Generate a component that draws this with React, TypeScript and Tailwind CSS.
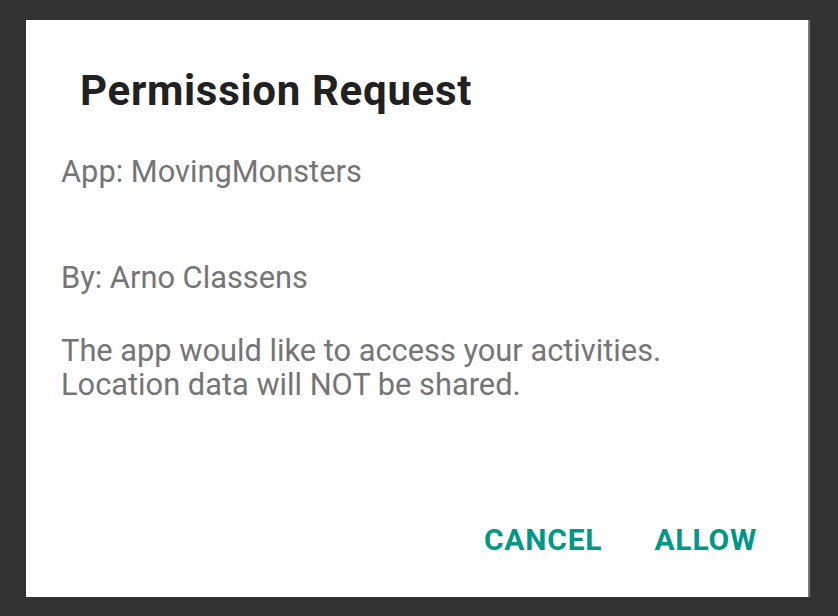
export default function App() {
  return (
    <div className="w-[838px] h-[616px] bg-[#333333] pt-5 pl-[26px]" style={{ fontFamily: "Roboto, 'Noto Sans', sans-serif" }}>
      <div className="w-[784px] h-[577px] bg-white border-r-2 border-[#7a7a7a] flex flex-col">
        <h1 className="pl-[54px] pt-[47px] text-[42px] leading-[48px] font-bold tracking-[0.7px] text-[#212121]">
          Permission Request
        </h1>
        <div className="pl-[35px] pt-[40px] text-[30.8px] leading-[34px] text-[#757575]">
          <p>App: MovingMonsters</p>
          <p className="mt-[72px]">By: Arno Classens</p>
          <p className="mt-[39px]">
            The app would like to access your activities.
            <br />
            Location data will NOT be shared.
          </p>
        </div>
        <div className="mt-auto mb-[39px] flex justify-end gap-[52px] pr-[51px]">
          <button className="text-[30px] leading-[36px] font-bold text-[#009688] tracking-[0.8px]">CANCEL</button>
          <button className="text-[30px] leading-[36px] font-bold text-[#009688] tracking-[0.8px]">ALLOW</button>
        </div>
      </div>
    </div>
  );
}
